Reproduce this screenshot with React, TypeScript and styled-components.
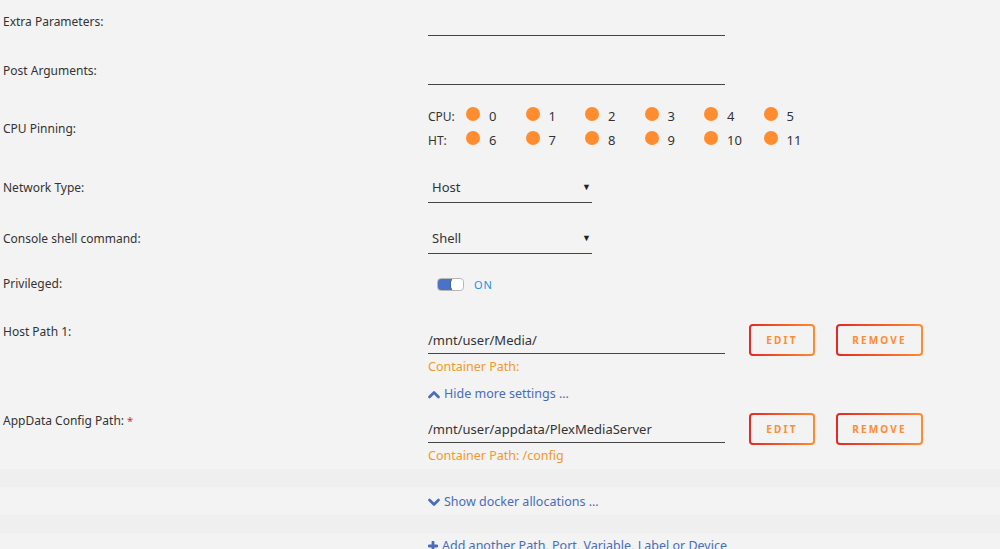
import React from 'react';
import styled, { createGlobalStyle } from 'styled-components';

const Global = createGlobalStyle`
  html, body { margin: 0; padding: 0; background: #f3f3f3; }
  body {
    font-family: "Noto Sans", "Open Sans", sans-serif;
    color: #333;
    font-size: 12px;
  }
`;

const Page = styled.div`
  width: 1000px;
  height: 549px;
  overflow: hidden;
  display: flex;
  flex-direction: column;
`;

const Row = styled.div<{ $h: number }>`
  display: grid;
  grid-template-columns: 428px 1fr;
  height: ${(p) => p.$h}px;
  flex-shrink: 0;
`;

const Stripe = styled.div`
  height: 18px;
  flex-shrink: 0;
  background: #efefef;
`;

const Label = styled.div<{ $top: number }>`
  padding-left: 3px;
  padding-top: ${(p) => p.$top}px;
  line-height: 20px;
  font-size: 12px;
  color: #333;
`;

const Req = styled.span`
  color: #e22828;
  margin-left: 3px;
  font-size: 11px;
  vertical-align: top;
`;

const Value = styled.div<{ $top: number }>`
  padding-top: ${(p) => p.$top}px;
  display: flex;
  flex-direction: column;
  align-items: flex-start;
`;

const TextInput = styled.input`
  width: 297px;
  height: 26px;
  box-sizing: border-box;
  border: 0;
  border-bottom: 1px solid #444;
  background: transparent;
  padding: 2px 0 3px 0;
  margin: 0;
  font-family: inherit;
  font-size: 13px;
  line-height: 20px;
  color: #333;
  outline: none;
`;

const Select = styled.div`
  width: 164px;
  height: 26px;
  box-sizing: border-box;
  border-bottom: 1px solid #444;
  padding: 0 0 5px 4px;
  display: flex;
  align-items: center;
  justify-content: space-between;
  font-size: 13px;
  line-height: 20px;
  color: #333;
`;

const Arrow = styled.span`
  font-size: 9px;
  color: #222;
  padding-right: 1px;
`;

const PinGrid = styled.div`
  display: grid;
  grid-template-columns: 38px repeat(6, 59.5px);
  grid-auto-rows: 24px;
  align-items: center;
  font-size: 13px;
`;

const PinLabel = styled.span`
  font-size: 12px;
`;

const Pin = styled.span`
  display: flex;
  align-items: center;
  gap: 9px;
`;

const Dot = styled.span`
  width: 14px;
  height: 14px;
  border-radius: 50%;
  background: #ff8c2f;
  display: inline-block;
  position: relative;
  top: -2px;
`;

const ToggleWrap = styled.div`
  display: flex;
  align-items: center;
  height: 20px;
  padding-left: 9px;
  gap: 10px;
`;

const Switch = styled.span`
  width: 27px;
  height: 13px;
  box-sizing: border-box;
  border-radius: 4px;
  border: 1px solid #b8b8b8;
  background: linear-gradient(90deg, #4a72c8 0 55%, #fff 55% 100%);
  position: relative;
`;

const Knob = styled.span`
  position: absolute;
  right: 0;
  top: 0;
  width: 12px;
  height: 11px;
  border-radius: 4px;
  background: #fff;
  box-shadow: -1px 0 1px rgba(0, 0, 0, 0.15);
`;

const OnText = styled.span`
  color: #2a8fe0;
  font-size: 11px;
  letter-spacing: 1px;
`;

const PathRow = styled.div`
  display: flex;
  align-items: flex-start;
`;

const PathCol = styled.div`
  display: flex;
  flex-direction: column;
  padding-top: 4px;
  width: 297px;
  margin-right: 24px;
`;

const Buttons = styled.div`
  display: flex;
  gap: 21px;
`;

const GradButton = styled.button<{ $w: number }>`
  width: ${(p) => p.$w}px;
  height: 32px;
  box-sizing: border-box;
  border: 2px solid transparent;
  border-radius: 4px;
  background: linear-gradient(#f3f3f3, #f3f3f3) padding-box,
    linear-gradient(90deg, #e22828, #ff8c2f) border-box;
  color: #ff8c2f;
  font-family: inherit;
  font-size: 10px;
  font-weight: 700;
  letter-spacing: 2.2px;
  padding: 0;
  cursor: pointer;
`;

const Container = styled.div`
  margin-top: 4px;
  color: #f29a2a;
  font-size: 12.5px;
  line-height: 18px;
`;

const LinkLine = styled.div<{ $top?: number }>`
  margin-top: ${(p) => p.$top ?? 0}px;
  color: #486dba;
  font-size: 12.5px;
  line-height: 18px;
  display: flex;
  align-items: center;
  gap: 4px;
`;

const CenterValue = styled.div`
  display: flex;
  align-items: center;
  padding-top: 2px;
`;

const ChevronUp = () => (
  <svg width="12" height="10" viewBox="0 0 12 10">
    <polyline points="1.5,8 6,3.5 10.5,8" fill="none" stroke="#486dba" strokeWidth="2.6" strokeLinecap="round" strokeLinejoin="round" />
  </svg>
);

const ChevronDown = () => (
  <svg width="12" height="10" viewBox="0 0 12 10">
    <polyline points="1.5,3 6,7.5 10.5,3" fill="none" stroke="#486dba" strokeWidth="2.6" strokeLinecap="round" strokeLinejoin="round" />
  </svg>
);

const Plus = () => (
  <svg width="10" height="10" viewBox="0 0 10 10">
    <path d="M5 1v8M1 5h8" stroke="#486dba" strokeWidth="2.8" strokeLinecap="round" />
  </svg>
);

const cpu = [0, 1, 2, 3, 4, 5];
const ht = [6, 7, 8, 9, 10, 11];

export default function App() {
  return (
    <Page>
      <Global />
      <Row $h={49}>
        <Label $top={12}>Extra Parameters:</Label>
        <Value $top={10}>
          <TextInput readOnly defaultValue="" />
        </Value>
      </Row>
      <Row $h={49}>
        <Label $top={12}>Post Arguments:</Label>
        <Value $top={10}>
          <TextInput readOnly defaultValue="" />
        </Value>
      </Row>
      <Row $h={64}>
        <Label $top={21}>CPU Pinning:</Label>
        <Value $top={6}>
          <PinGrid>
            <PinLabel>CPU:</PinLabel>
            {cpu.map((n) => (
              <Pin key={n}>
                <Dot />
                {n}
              </Pin>
            ))}
            <PinLabel>HT:</PinLabel>
            {ht.map((n) => (
              <Pin key={n}>
                <Dot />
                {n}
              </Pin>
            ))}
          </PinGrid>
        </Value>
      </Row>
      <Row $h={51}>
        <Label $top={16}>Network Type:</Label>
        <Value $top={15}>
          <Select>
            Host<Arrow>▼</Arrow>
          </Select>
        </Value>
      </Row>
      <Row $h={51}>
        <Label $top={16}>Console shell command:</Label>
        <Value $top={15}>
          <Select>
            Shell<Arrow>▼</Arrow>
          </Select>
        </Value>
      </Row>
      <Row $h={40}>
        <Label $top={10}>Privileged:</Label>
        <Value $top={10}>
          <ToggleWrap>
            <Switch>
              <Knob />
            </Switch>
            <OnText>ON</OnText>
          </ToggleWrap>
        </Value>
      </Row>
      <Row $h={99}>
        <Label $top={18}>Host Path 1:</Label>
        <Value $top={20}>
          <PathRow>
            <PathCol>
              <TextInput readOnly defaultValue="/mnt/user/Media/" />
              <Container>Container Path:</Container>
            </PathCol>
            <Buttons>
              <GradButton $w={66}>EDIT</GradButton>
              <GradButton $w={87}>REMOVE</GradButton>
            </Buttons>
          </PathRow>
          <LinkLine $top={9}>
            <ChevronUp />
            Hide more settings ...
          </LinkLine>
        </Value>
      </Row>
      <Row $h={66}>
        <Label $top={8}>
          AppData Config Path:<Req>*</Req>
        </Label>
        <Value $top={10}>
          <PathRow>
            <PathCol>
              <TextInput readOnly defaultValue="/mnt/user/appdata/PlexMediaServer" />
              <Container>Container Path: /config</Container>
            </PathCol>
            <Buttons>
              <GradButton $w={66}>EDIT</GradButton>
              <GradButton $w={87}>REMOVE</GradButton>
            </Buttons>
          </PathRow>
        </Value>
      </Row>
      <Stripe />
      <Row $h={28}>
        <div />
        <CenterValue>
          <LinkLine>
            <ChevronDown />
            Show docker allocations ...
          </LinkLine>
        </CenterValue>
      </Row>
      <Stripe />
      <Row $h={40}>
        <div />
        <Value $top={4}>
          <LinkLine>
            <Plus />
            Add another Path, Port, Variable, Label or Device
          </LinkLine>
        </Value>
      </Row>
    </Page>
  );
}
